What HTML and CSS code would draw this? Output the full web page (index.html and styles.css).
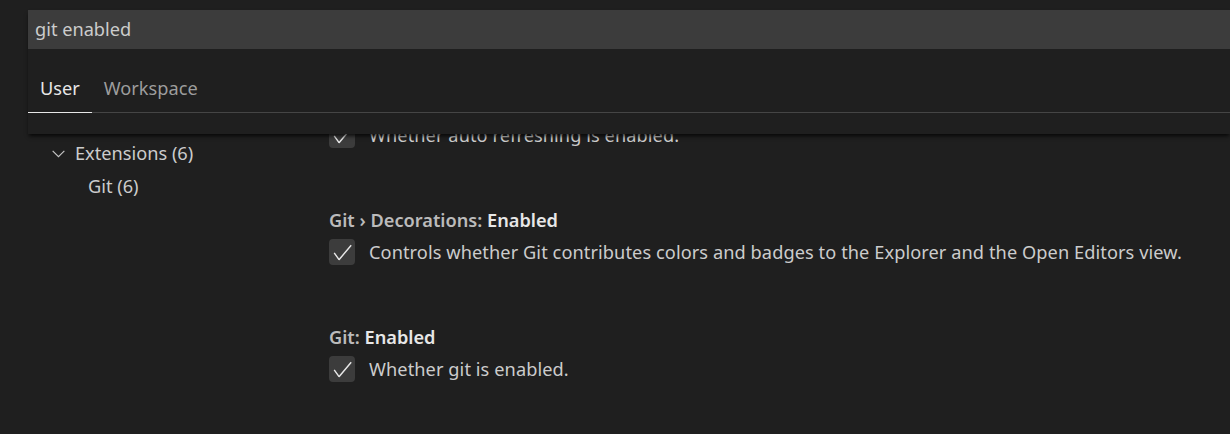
FILE: index.html
```html
<!DOCTYPE html>
<html>
<head>
<meta charset="utf-8">
<link rel="stylesheet" href="styles.css">
</head>
<body>
<div class="page">
  <header class="header">
    <div class="search">git enabled</div>
    <div class="tabs">
      <div class="tab active">User</div>
      <div class="tab">Workspace</div>
    </div>
    <div class="header-space"></div>
  </header>
  <div class="body">
    <nav class="tree">
      <div class="tree-row">
        <svg class="chev" viewBox="0 0 16 16" width="17" height="17"><path d="M2.5 5.5l5.5 5.5 5.5-5.5" fill="none" stroke="#c5c5c5" stroke-width="1.1"/></svg>
        <span>Extensions (6)</span>
      </div>
      <div class="tree-row child">Git (6)</div>
    </nav>
    <main class="settings">
      <div class="item first">
        <div class="row">
          <span class="box"><svg viewBox="0 0 16 16" width="23" height="23"><path d="M14.431 3.323l-8.47 10-.79-.036-3.35-4.77.818-.574 2.978 4.24 8.051-9.506.764.646z" fill="#e8e8e8"/></svg></span>
          <span class="desc">Whether auto refreshing is enabled.</span>
        </div>
      </div>
      <div class="item">
        <div class="title"><span class="cat">Git › Decorations: </span><span class="key">Enabled</span></div>
        <div class="row">
          <span class="box"><svg viewBox="0 0 16 16" width="23" height="23"><path d="M14.431 3.323l-8.47 10-.79-.036-3.35-4.77.818-.574 2.978 4.24 8.051-9.506.764.646z" fill="#e8e8e8"/></svg></span>
          <span class="desc">Controls whether Git contributes colors and badges to the Explorer and the Open Editors view.</span>
        </div>
      </div>
      <div class="item">
        <div class="title"><span class="cat">Git: </span><span class="key">Enabled</span></div>
        <div class="row">
          <span class="box"><svg viewBox="0 0 16 16" width="23" height="23"><path d="M14.431 3.323l-8.47 10-.79-.036-3.35-4.77.818-.574 2.978 4.24 8.051-9.506.764.646z" fill="#e8e8e8"/></svg></span>
          <span class="desc">Whether git is enabled.</span>
        </div>
      </div>
    </main>
  </div>
</div>
</body>
</html>
```
FILE: styles.css
```css
html, body {
  margin: 0;
  padding: 0;
  background: #1f1f1f;
  width: 1230px;
  height: 434px;
  overflow: hidden;
  font-family: "Noto Sans", "Open Sans", sans-serif;
  color: #cccccc;
}

.page {
  display: flex;
  flex-direction: column;
  height: 434px;
  padding-top: 10px;
  box-sizing: border-box;
}

.header {
  margin-left: 28px;
  background: #1f1f1f;
  position: relative;
  z-index: 2;
  box-shadow: 0 3px 4px -1px rgba(0, 0, 0, 0.8);
}

.search {
  height: 39px;
  background: #3c3c3c;
  color: #cccccc;
  font-size: 18.2px;
  line-height: 39px;
  padding-left: 7px;
}

.tabs {
  display: flex;
  height: 64px;
  align-items: stretch;
  border-bottom: 1px solid #454545;
  box-sizing: border-box;
}

.tab {
  font-size: 18.2px;
  color: #9d9d9d;
  padding: 14px 6px 0 12px;
  display: flex;
  align-items: center;
  box-sizing: border-box;
}

.tab.active {
  color: #e7e7e7;
  border-bottom: 1px solid #e7e7e7;
  margin-bottom: -1px;
  padding-right: 12px;
}

.header-space {
  height: 21px;
}

.body {
  display: flex;
  flex: 1;
  overflow: hidden;
}

.tree {
  width: 329px;
  padding-left: 50px;
  box-sizing: border-box;
  padding-top: 2px;
  font-size: 18.2px;
  flex: none;
}

.tree-row {
  display: flex;
  align-items: center;
  height: 33px;
  gap: 8px;
}

.chev {
  flex: none;
  margin-top: 1px;
}

.tree-row.child {
  padding-left: 38px;
}

.settings {
  flex: 1;
  font-size: 18.2px;
  min-width: 0;
}

.item {
  display: flex;
  flex-direction: column;
  padding-bottom: 59px;
}

.item.first {
  margin-top: -12px;
}

.title {
  height: 26px;
  line-height: 26px;
  font-weight: 600;
  color: #bbbbbb;
  white-space: nowrap;
  margin-bottom: 6px;
}

.title .key {
  color: #e7e7e7;
}

.row {
  display: flex;
  align-items: center;
  gap: 14px;
}

.box {
  width: 26px;
  height: 26px;
  border-radius: 4px;
  background: #3c3c3c;
  display: flex;
  align-items: center;
  justify-content: center;
  flex: none;
}

.desc {
  color: #cccccc;
  white-space: nowrap;
  letter-spacing: 0.08px;
}
```
